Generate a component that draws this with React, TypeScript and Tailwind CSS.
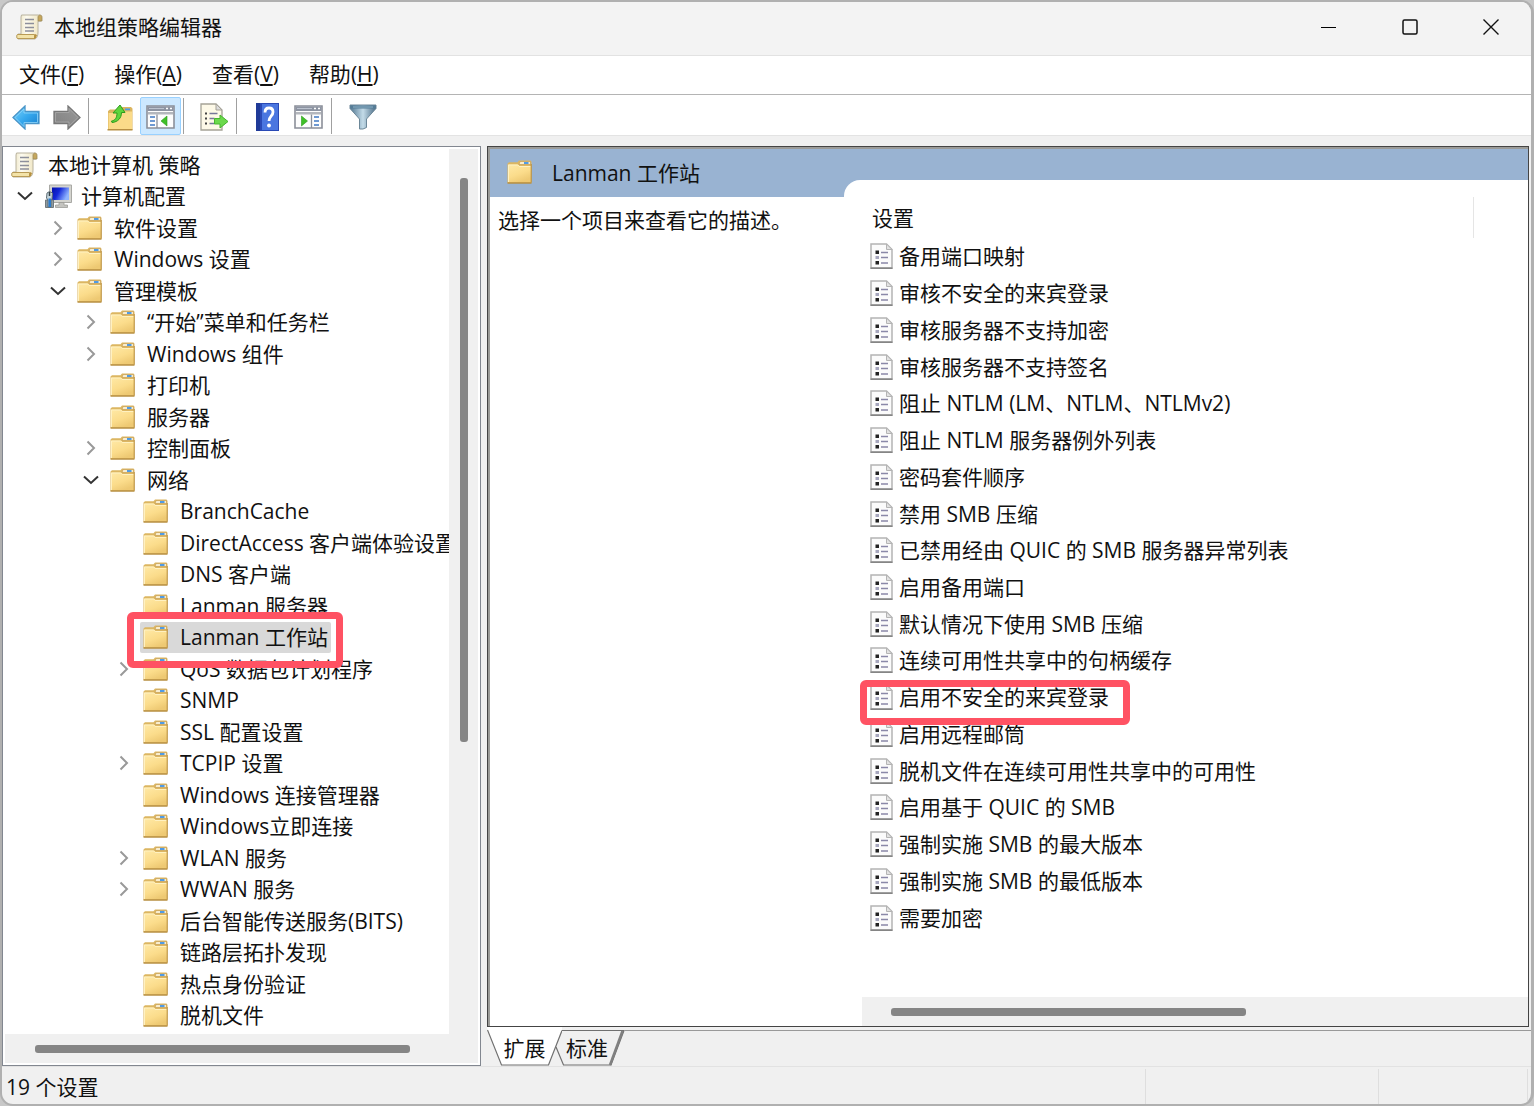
import { ReactNode, useState } from "react";

type TreeItem = {
    label: string;
    level: number;
    icon?: "scroll" | "computer";
    state?: "open" | "closed";
    marked?: boolean;
};

const treeItems: TreeItem[] = [
    { label: "本地计算机 策略", level: 0, icon: "scroll" },
    { label: "计算机配置", level: 1, icon: "computer", state: "open" },
    { label: "软件设置", level: 2, state: "closed" },
    { label: "Windows 设置", level: 2, state: "closed" },
    { label: "管理模板", level: 2, state: "open" },
    { label: "“开始”菜单和任务栏", level: 3, state: "closed" },
    { label: "Windows 组件", level: 3, state: "closed" },
    { label: "打印机", level: 3 },
    { label: "服务器", level: 3 },
    { label: "控制面板", level: 3, state: "closed" },
    { label: "网络", level: 3, state: "open" },
    { label: "BranchCache", level: 4 },
    { label: "DirectAccess 客户端体验设置", level: 4 },
    { label: "DNS 客户端", level: 4 },
    { label: "Lanman 服务器", level: 4 },
    { label: "Lanman 工作站", level: 4, marked: true },
    { label: "QoS 数据包计划程序", level: 4, state: "closed" },
    { label: "SNMP", level: 4 },
    { label: "SSL 配置设置", level: 4 },
    { label: "TCPIP 设置", level: 4, state: "closed" },
    { label: "Windows 连接管理器", level: 4 },
    { label: "Windows立即连接", level: 4 },
    { label: "WLAN 服务", level: 4, state: "closed" },
    { label: "WWAN 服务", level: 4, state: "closed" },
    { label: "后台智能传送服务(BITS)", level: 4 },
    { label: "链路层拓扑发现", level: 4 },
    { label: "热点身份验证", level: 4 },
    { label: "脱机文件", level: 4 },
];

const settings = [
    "备用端口映射",
    "审核不安全的来宾登录",
    "审核服务器不支持加密",
    "审核服务器不支持签名",
    "阻止 NTLM (LM、NTLM、NTLMv2)",
    "阻止 NTLM 服务器例外列表",
    "密码套件顺序",
    "禁用 SMB 压缩",
    "已禁用经由 QUIC 的 SMB 服务器异常列表",
    "启用备用端口",
    "默认情况下使用 SMB 压缩",
    "连续可用性共享中的句柄缓存",
    "启用不安全的来宾登录",
    "启用远程邮筒",
    "脱机文件在连续可用性共享中的可用性",
    "启用基于 QUIC 的 SMB",
    "强制实施 SMB 的最大版本",
    "强制实施 SMB 的最低版本",
    "需要加密",
];

const markedSetting = "启用不安全的来宾登录";

const menus = [
    { label: "文件", hotkey: "F" },
    { label: "操作", hotkey: "A" },
    { label: "查看", hotkey: "V" },
    { label: "帮助", hotkey: "H" },
];

const indents = ["pl-0", "pl-0", "pl-[33px]", "pl-[66px]", "pl-[99px]"];

function ScrollIcon() {
    return (
        <svg width="27" height="26" viewBox="0 0 27 26" className="shrink-0">
            <defs>
                <linearGradient id="paper" x1="0" x2="1">
                    <stop offset="0" stopColor="#e9dfb9" />
                    <stop offset="0.4" stopColor="#fdfbf0" />
                    <stop offset="1" stopColor="#eee3bd" />
                </linearGradient>
            </defs>
            <path d="M5.500 1h17c2 0 2.500 1 2.500 3v3h-3v11c0 4-1 6-3 7H2c-1.500 0-1.500-5 0-5h3V3z" fill="url(#paper)" stroke="#b8b29e" />
            <path d="M22 7V3c0-1 1-2 2-2 1.500 0 2 1 2 2.500V7z" fill="#c6a75c" stroke="#9d8a5c" strokeWidth="0.800" />
            <path d="M1.500 20.500h17v4h-17c-1-1-1-3 0-4z" fill="#f3e3a8" stroke="#b99b55" />
            <path d="M19 20l2 1-1 3-2 1z" fill="#b8913f" />
            <path d="M9 5.500h9M9 9.500h9M9 13.500h9M9 17h9" stroke="#8d8f9b" strokeWidth="1.300" />
        </svg>
    );
}

function ComputerIcon() {
    return (
        <svg width="28" height="25" viewBox="0 0 28 25" className="shrink-0">
            <defs>
                <linearGradient id="screen" x1="0" x2="1" y1="0" y2="0.4">
                    <stop offset="0" stopColor="#0510a8" />
                    <stop offset="0.45" stopColor="#1226d8" />
                    <stop offset="1" stopColor="#8fb4ff" />
                </linearGradient>
            </defs>
            <path d="M5.500 1h22v17.500h-22z" fill="#d4d4cf" stroke="#a9a9a5" />
            <path d="M8 3.500h17V16H8z" fill="url(#screen)" />
            <path d="M15 18.500h5V21h3.500v2.500h-12V21H15z" fill="#c4c4c0" stroke="#9c9c98" strokeWidth="0.800" />
            <path d="M1.500 16h8v7.500h-8z" fill="#8f9aa0" stroke="#70797e" />
            <path d="M5.500 7.500l3 1.500-.5 6-1 1.500v6.500H4V16l-1.500-2 .5-5z" fill="#c5d5dc" stroke="#5f6e75" />
            <path d="M4.500 14.500H7V23H4.500z" fill="#2b7cd0" />
            <path d="M5.500 8v4" stroke="#394349" strokeWidth="1.500" />
        </svg>
    );
}

function FolderIcon() {
    return (
        <svg width="25" height="24" viewBox="0 0 25 24" className="shrink-0">
            <defs>
                <linearGradient id="folder" x1="0" x2="0.5" y1="0" y2="1">
                    <stop offset="0" stopColor="#ffe9a6" />
                    <stop offset="0.6" stopColor="#fbdc8b" />
                    <stop offset="1" stopColor="#eec973" />
                </linearGradient>
            </defs>
            <path d="M.5 23V3.500L2 2.300h8.500L12 .5h11.500l1 1.200v21.300z" fill="#dcb662" />
            <path d="M12 4.500l1-3h10.500v3z" fill="#f8edcf" stroke="#c79f50" strokeWidth="0.700" />
            <path d="M17 2h4.500v2H17z" fill="#4f9be6" />
            <path d="M1 4.500h10L12.500 6H24v16.500H1z" fill="url(#folder)" />
            <path d="M1.500 22V5h9.300l1.400 1.500h11.300" fill="none" stroke="#fff3c6" strokeWidth="0.900" />
            <path d="M24.200 4v18.500" stroke="#b98e3e" strokeWidth="1" />
            <path d="M.5 23h24" stroke="#b78f42" strokeWidth="1.500" />
        </svg>
    );
}

function PolicyIcon() {
    return (
        <svg width="23" height="26" viewBox="0 0 23 26" className="shrink-0">
            <path d="M1 1h15.500L22 6.500V25H1z" fill="#fbfbfb" stroke="#b4b4b4" strokeWidth="1.500" />
            <path d="M.5 25.200h22" stroke="#858585" strokeWidth="1.600" />
            <path d="M16.500 1v5.500H22z" fill="#e2e2e2" stroke="#b4b4b4" />
            <path d="M5.500 7.500h3.500V11H5.500zM5.500 18h3.500v3.500H5.500z" fill="#222" />
            <path d="M5.500 13h3.500v3H5.500z" fill="#a6a6bd" />
            <path d="M11 9.500h7M11 14.500h7M11 20h7" stroke="#8a88a8" strokeWidth="1.500" />
        </svg>
    );
}

function ArrowIcon({ forward }: { forward?: boolean }) {
    return (
        <svg width="28" height="25" viewBox="0 0 28 25" className={forward ? "rotate-180" : ""}>
            <defs>
                <linearGradient id="blueArrow" x1="0" x2="1" y1="0" y2="1">
                    <stop offset="0" stopColor="#7fd6fa" />
                    <stop offset="0.5" stopColor="#35a8ee" />
                    <stop offset="1" stopColor="#1479c8" />
                </linearGradient>
                <linearGradient id="grayArrow" x1="0" x2="1" y1="1" y2="0">
                    <stop offset="0" stopColor="#999" />
                    <stop offset="1" stopColor="#808080" />
                </linearGradient>
            </defs>
            <path
                d="M1 12.500L13 1v5.500h14v12H13V24z"
                fill={forward ? "url(#grayArrow)" : "url(#blueArrow)"}
                stroke={forward ? "#777" : "#4a95c8"}
                strokeWidth="1.300"
            />
            <path d="M3 12.500l9-8.500v4h13.500v9.500H12v4z" fill="none" stroke={forward ? "#aaa" : "#8fd6fa"} strokeWidth="0.800" />
        </svg>
    );
}

function UpFolderIcon() {
    return (
        <svg width="26" height="27" viewBox="0 0 26 27">
            <path d="M1 26V7l2-1.500h8L13 3h11l1.500 1.500V26z" fill="#dcb55f" />
            <path d="M18 4.500h5v1.800h-5z" fill="#4f9be6" />
            <path d="M1.500 9H12l2-1.500h11V25H1.500z" fill="#fbdb89" />
            <path d="M.5 25.700h25" stroke="#b78f42" strokeWidth="1.500" />
            <path d="M4.500 17c3.500-.5 5.500-3 5.500-8H6l7-8 5 7.500h-3.500C14.500 14 11 18 5 18.500z" fill="#5fd43b" stroke="#2f9c1e" />
        </svg>
    );
}

function PaneIcon({ flipped }: { flipped?: boolean }) {
    return (
        <svg width="29" height="24" viewBox="0 0 29 24">
            <path d="M1 1h27v22H1z" fill="#fdfdfd" stroke="#8b8f99" strokeWidth="1.600" />
            <path d="M1.500 1.500h26v4.500h-26z" fill="#8d94a2" />
            <path d="M3 3.500h15" stroke="#bcc3cf" />
            <path d="M20 3.500h2M24 3.500h2" stroke="#fff" strokeWidth="1.500" />
            <path d="M2 8.300h25" stroke="#b4b7bd" strokeWidth="2.500" />
            {flipped ? (
                <g>
                    <path d="M17.500 9.500V23" stroke="#8b8f99" strokeWidth="1.300" />
                    <path d="M7.500 11l6 5-6 5z" fill="#3fc028" stroke="#2b9a1b" strokeWidth="0.600" />
                    <path d="M20 12h5M20 16h5M20 20h5" stroke="#3f78c4" strokeWidth="1.600" />
                </g>
            ) : (
                <g>
                    <path d="M11 9.500V23" stroke="#8b8f99" strokeWidth="1.300" />
                    <path d="M21 11l-6 5 6 5z" fill="#3fc028" stroke="#2b9a1b" strokeWidth="0.600" />
                    <path d="M4 12h5M4 16h5M4 20h5" stroke="#3f78c4" strokeWidth="1.600" />
                </g>
            )}
        </svg>
    );
}

function ExportIcon() {
    return (
        <svg width="29" height="28" viewBox="0 0 29 28">
            <path d="M1 1h15l6 6v20H1z" fill="#fdf9e8" stroke="#a5a297" strokeWidth="1.300" />
            <path d="M16 1v6h6z" fill="#ddd" stroke="#a5a297" />
            <path d="M5 10.500h2M5 15.500h2M5 20.500h2" stroke="#444" strokeWidth="1.800" />
            <path d="M9.500 10.500h8M9.500 15.500h5M9.500 20.500h5" stroke="#777799" strokeWidth="1.500" />
            <path d="M14.500 15.500H20V12l8 6.500-8 6.500v-4h-5.500z" fill="#6bd94c" stroke="#46b52e" />
        </svg>
    );
}

function HelpIcon() {
    return (
        <svg width="23" height="28" viewBox="0 0 23 28">
            <path d="M0 0h23v28H0z" fill="#2a49b5" />
            <path d="M6 1h16v26H6z" fill="#4a76e0" />
            <path d="M0 0h4v28H0z" fill="#203a98" />
            <path d="M9 9.500c0-3 1.500-4.500 4-4.500s4 1.500 4 4c0 4-4 4.500-4 9" fill="none" stroke="#fff" strokeWidth="2.800" />
            <circle cx="13" cy="22.500" r="1.900" fill="#fff" />
        </svg>
    );
}

function FilterIcon() {
    return (
        <svg width="28" height="26" viewBox="0 0 28 26">
            <defs>
                <linearGradient id="funnel" x1="0" x2="1">
                    <stop offset="0" stopColor="#4f7590" />
                    <stop offset="0.5" stopColor="#c3dbe8" />
                    <stop offset="1" stopColor="#4a6c86" />
                </linearGradient>
            </defs>
            <path d="M1 1h26v3.500L17.500 15v8.500L14 25h-3.500V15L1 4.500z" fill="url(#funnel)" stroke="#6c8798" />
            <path d="M1.500 1.500h25v3h-25z" fill="#557c97" />
            <path d="M4 3h20" stroke="#8fb3c8" />
        </svg>
    );
}

function Chevron({ open }: { open: boolean }) {
    return open ? (
        <svg width="16" height="10" viewBox="0 0 16 10" fill="none">
            <path d="M1 1.500l7 6.500 7-6.500" stroke="#333" strokeWidth="2" />
        </svg>
    ) : (
        <svg width="10" height="16" viewBox="0 0 10 16" fill="none">
            <path d="M1.500 1.500L8 8l-6.500 6.500" stroke="#999" strokeWidth="2" />
        </svg>
    );
}

function Divider() {
    return <div className="w-px h-9 bg-[#a0a0a0]" />;
}

function ToolButton({ label, active, children }: { label: string; active?: boolean; children: ReactNode }) {
    return (
        <button
            type="button"
            aria-label={label}
            className={`flex h-[38px] items-center justify-center pt-[3px] ${active ? "w-[41px] rounded-xs border border-[#99d1ff] bg-[#cce8ff]" : "w-[41px]"}`}
        >
            {children}
        </button>
    );
}

function TitleBar() {
    return (
        <header className="flex h-[54px] items-center border-b border-[#e2e2e2] bg-[#f3f3f3] pb-[3px] pl-[14px]">
            <ScrollIcon />
            <h1 className="ml-[11px] flex-1">本地组策略编辑器</h1>
            <button type="button" aria-label="最小化" className="flex h-full w-[81px] items-center justify-center">
                <svg width="15" height="15" viewBox="0 0 15 15"><path d="M0 7.500h15" stroke="#000" /></svg>
            </button>
            <button type="button" aria-label="最大化" className="flex h-full w-[81px] items-center justify-center">
                <svg width="16" height="16" viewBox="0 0 16 16" fill="none"><rect x="1" y="1" width="14" height="14" rx="1.500" stroke="#111" strokeWidth="1.500" /></svg>
            </button>
            <button type="button" aria-label="关闭" className="flex h-full w-[81px] items-center justify-center">
                <svg width="16" height="16" viewBox="0 0 16 16"><path d="M.5.5l15 15M15.500.5l-15 15" stroke="#111" strokeWidth="1.400" /></svg>
            </button>
        </header>
    );
}

function MenuBar() {
    return (
        <nav className="flex h-[39px] items-center gap-[30px] border-b border-[#b4b4b4] bg-white pb-[2px] pl-[17px]">
            {menus.map((menu) => (
                <button key={menu.hotkey} type="button">
                    {menu.label}(<u className="underline-offset-2">{menu.hotkey}</u>)
                </button>
            ))}
        </nav>
    );
}

function ToolBar() {
    return (
        <div className="flex h-[41px] items-center border-b border-[#e3e3e3] bg-white pt-px pl-[3px]">
            <ToolButton label="后退"><ArrowIcon /></ToolButton>
            <ToolButton label="前进"><ArrowIcon forward /></ToolButton>
            <div className="pl-px"><Divider /></div>
            <div className="flex px-[10px] pr-[2px]">
                <ToolButton label="上一级"><UpFolderIcon /></ToolButton>
                <ToolButton label="显示/隐藏控制台树" active><PaneIcon /></ToolButton>
            </div>
            <Divider />
            <div className="flex pl-[10px] pr-px">
                <ToolButton label="导出列表"><ExportIcon /></ToolButton>
            </div>
            <Divider />
            <div className="flex pl-[10px] pr-[2px]">
                <ToolButton label="帮助"><HelpIcon /></ToolButton>
                <ToolButton label="显示/隐藏操作窗格"><PaneIcon flipped /></ToolButton>
            </div>
            <Divider />
            <div className="flex pl-[10px]">
                <ToolButton label="筛选器"><FilterIcon /></ToolButton>
            </div>
        </div>
    );
}

function TreePane({ selected, onSelect }: { selected: string; onSelect: (label: string) => void }) {
    return (
        <aside className="flex w-[479px] shrink-0 flex-col border border-[#828790] bg-white p-[2px]">
            <div className="flex flex-1">
                <ul className="flex min-w-0 flex-1 flex-col overflow-hidden pb-[3px] pl-[3px]">
                    {treeItems.map((item) => (
                        <li key={item.label} className={`flex flex-1 items-center ${indents[item.level]}`}>
                            {item.level > 0 && (
                                <span className="flex w-[33px] shrink-0 justify-center">
                                    {item.state && (
                                        <button type="button" aria-label={`${item.state === "open" ? "折叠" : "展开"} ${item.label}`}>
                                            <Chevron open={item.state === "open"} />
                                        </button>
                                    )}
                                </span>
                            )}
                            <span className="relative shrink-0">
                                <button
                                    type="button"
                                    onClick={() => onSelect(item.label)}
                                    className={`flex h-[31px] items-center rounded-xs px-[3px] whitespace-nowrap ${selected === item.label ? "bg-[#d9d9d9]" : ""}`}
                                >
                                    <span className="flex w-[37px]">
                                        {item.icon === "scroll" ? <ScrollIcon /> : item.icon === "computer" ? <ComputerIcon /> : <FolderIcon />}
                                    </span>
                                    {item.label}
                                </button>
                                {item.marked && (
                                    <span className="pointer-events-none absolute -top-[10px] -right-[12px] -bottom-[15px] -left-[13px] z-10 rounded-[6px] border-[7px] border-[#ff5263]" />
                                )}
                            </span>
                        </li>
                    ))}
                </ul>
                <div className="flex w-[29px] flex-col items-center bg-[#f0f0f0] pt-[29px]">
                    <div className="h-[564px] w-[8px] rounded-[3px] bg-[#858585]" />
                </div>
            </div>
            <div className="flex h-[29px] items-center bg-[#f0f0f0] pl-[30px]">
                <div className="h-[8px] w-[375px] rounded-[3px] bg-[#858585]" />
            </div>
        </aside>
    );
}

function SettingsTable() {
    return (
        <table className="flex flex-1 flex-col">
            <thead className="block pr-[54px]">
                <tr className="block border-r border-[#e5e5e5]">
                    <th className="flex h-[41px] items-center pl-[10px] font-normal">设置</th>
                </tr>
            </thead>
            <tbody className="flex flex-1 flex-col pb-[61px]">
                {settings.map((name) => (
                    <tr key={name} className="flex flex-1 items-center">
                        <td className="relative flex items-center gap-[6px] pl-[8px]">
                            <PolicyIcon />
                            {name}
                            {name === markedSetting && (
                                <span className="pointer-events-none absolute -top-[2px] -right-[21px] -bottom-[13px] -left-[2px] z-10 rounded-[6px] border-[7px] border-[#ff5263]" />
                            )}
                        </td>
                    </tr>
                ))}
            </tbody>
        </table>
    );
}

function DetailPane({ title }: { title: string }) {
    return (
        <main className="flex flex-1 flex-col">
            <section className="mr-[2px] flex flex-1 flex-col border border-[#444] bg-white">
                <div className="flex flex-1 flex-col border-t-2 border-l-2 border-[#9b9b98]">
                    <div className="flex h-[48px] bg-[#99b3d2]">
                        <h2 className="flex w-[354px] items-center pl-[17px]">
                            <span className="w-[45px] pb-[3px]"><FolderIcon /></span>
                            {title}
                        </h2>
                        <div className="mt-[31px] flex-1 rounded-tl-[16px] bg-white" />
                    </div>
                    <div className="flex flex-1">
                        <p className="w-[372px] pt-[8px] pl-[8px]">选择一个项目来查看它的描述。</p>
                        <div className="flex flex-1 flex-col">
                            <SettingsTable />
                            <div className="flex h-[29px] items-center bg-[#f0f0f0] pl-[29px]">
                                <div className="h-[8px] w-[355px] rounded-[3px] bg-[#858585]" />
                            </div>
                        </div>
                    </div>
                </div>
            </section>
            <div className="flex h-[39px] pt-[3px]">
                <button type="button" className="relative z-10 h-[36px] w-[75px]">
                    <svg width="75" height="39" viewBox="0 0 75 39" className="absolute -top-[3px] left-0">
                        <path d="M0 0h75v3L61.500 38h-47L.5 3z" fill="#fff" />
                        <path d="M.5 3l14 35h47L75 3.500" fill="none" stroke="#707070" strokeWidth="1.200" />
                    </svg>
                    <span className="relative">扩展</span>
                </button>
                <button type="button" className="relative -ml-[13px] h-[36px] w-[76px]">
                    <svg width="76" height="36" viewBox="0 0 76 36" className="absolute top-0 left-0">
                        <path d="M13 .5h62L62 35H14.500L7 17" fill="none" stroke="#707070" strokeWidth="1.200" />
                        <path d="M73.500 1L61 35" stroke="#808080" strokeWidth="2.500" />
                    </svg>
                    <span className="relative">标准</span>
                </button>
                <div className="flex-1 border-t border-[#999]" />
            </div>
        </main>
    );
}

export default function App() {
    const [selected, setSelected] = useState("Lanman 工作站");

    return (
        <div className="flex min-h-screen flex-col bg-[#c8c8c8] font-['Open_Sans','Noto_Sans_CJK_SC',sans-serif] text-[21px] leading-[30px] text-[#111]">
            <div className="flex flex-1 flex-col overflow-hidden rounded-[13px] border-2 border-r-[3px] border-[#b0b0b0] bg-[#f0f0f0]">
                <TitleBar />
                <MenuBar />
                <ToolBar />
                <div className="flex flex-1 gap-[6px] pt-[10px]">
                    <TreePane selected={selected} onSelect={setSelected} />
                    <DetailPane title="Lanman 工作站" />
                </div>
                <footer className="flex h-[38px] border-t border-[#e2e2e2] pt-[2px] pr-[3px]">
                    <div className="flex-1 border-r border-[#dedede] pt-[3px] pl-[4px]">19 个设置</div>
                    <div className="w-[233px] border-r border-[#dedede]" />
                    <div className="w-[149px] border-r border-[#dedede]" />
                </footer>
            </div>
        </div>
    );
}
